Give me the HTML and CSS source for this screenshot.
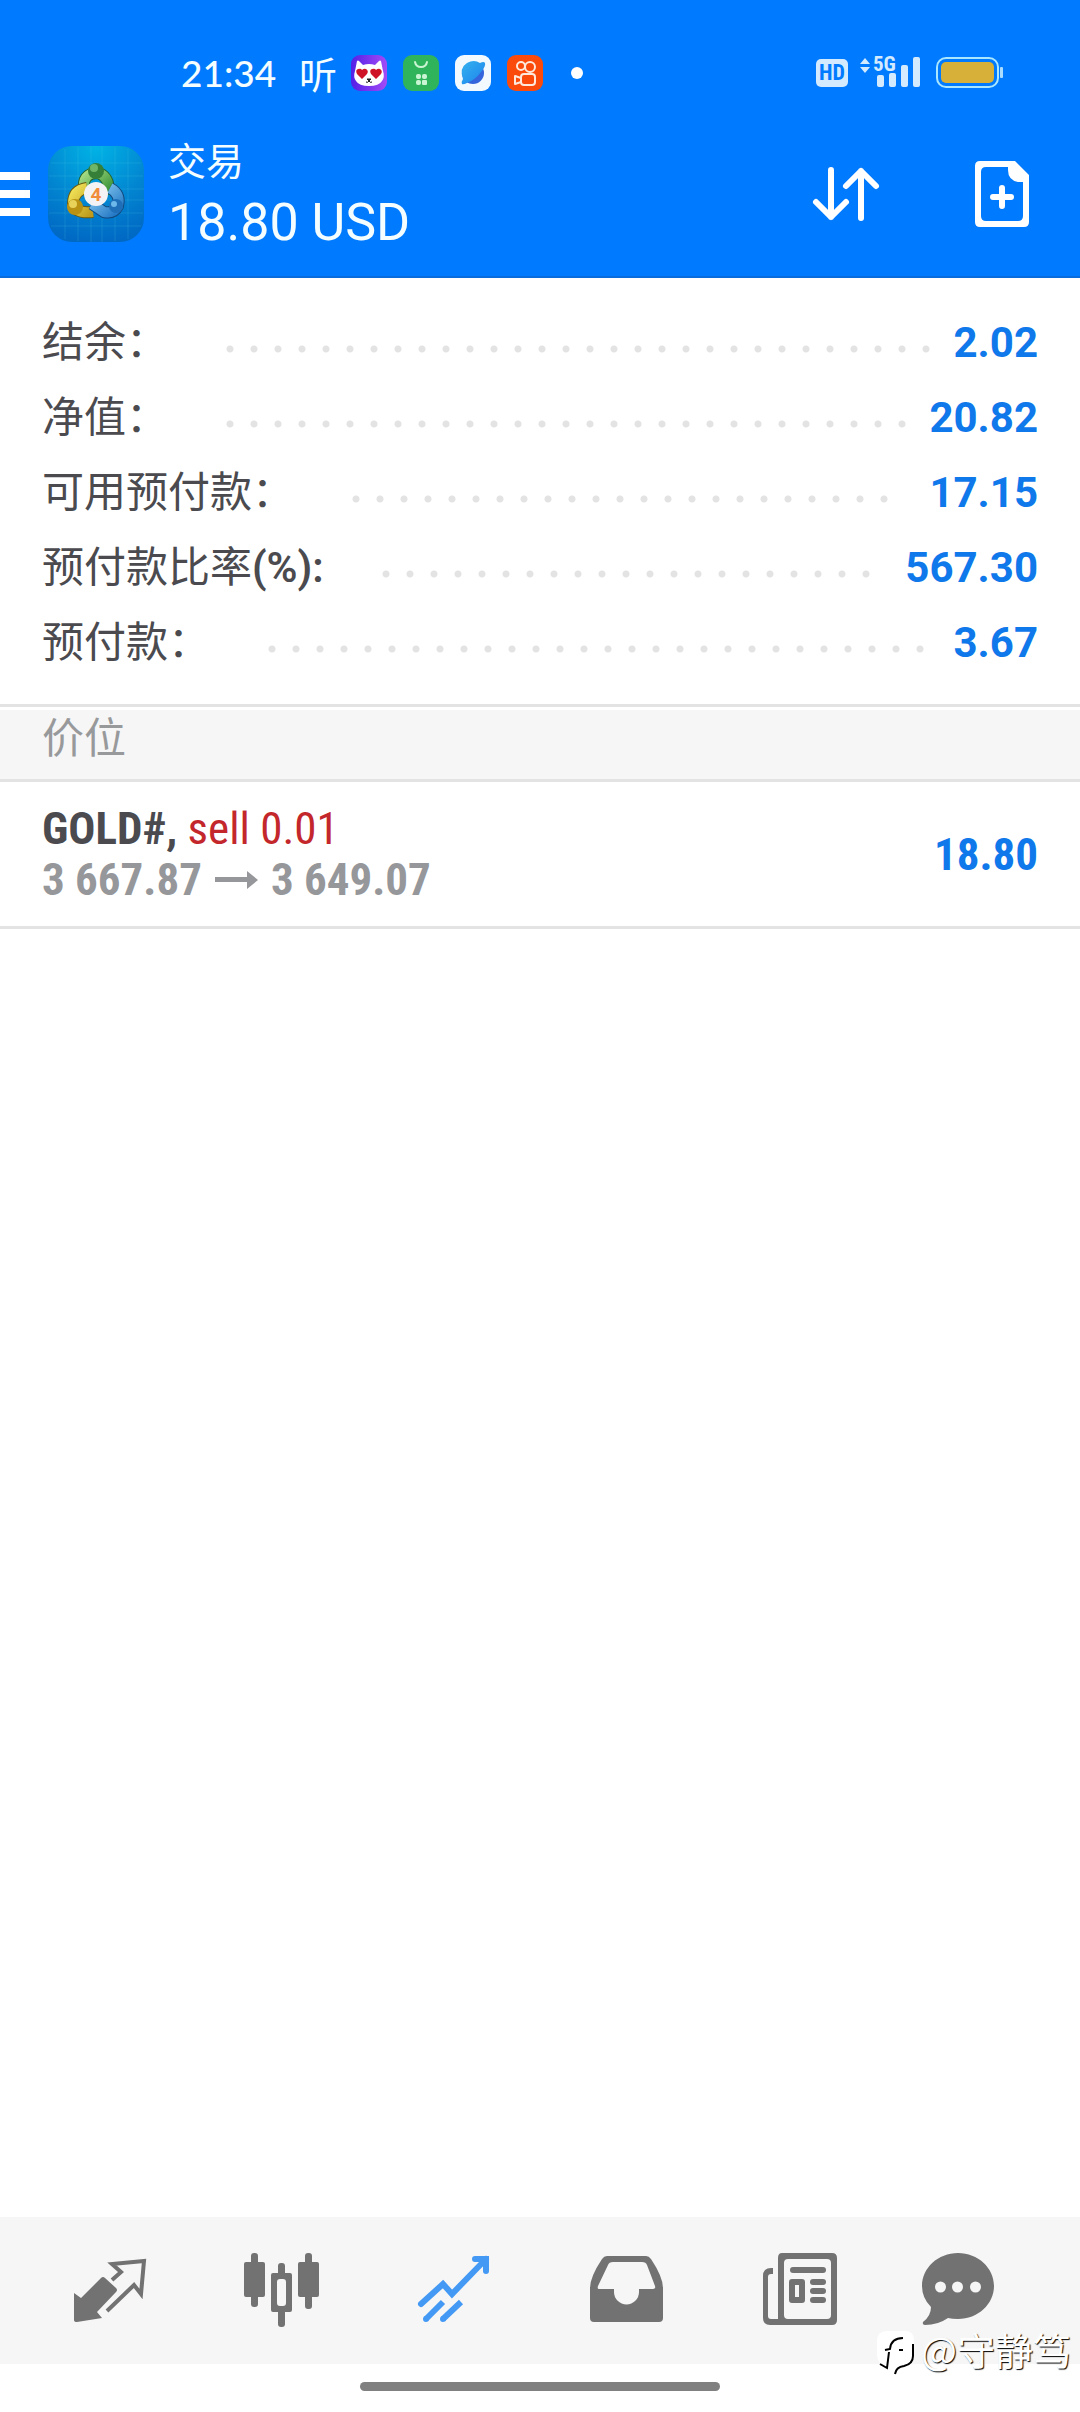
FILE: index.html
```html
<!DOCTYPE html>
<html lang="zh-CN">
<head>
<meta charset="utf-8">
<meta name="viewport" content="width=device-width, initial-scale=1">
<title>交易</title>
<link rel="stylesheet" href="styles.css">
</head>
<body>
<header class="top">
  <div class="status">
    <div class="status-group">
      <time class="clock">21:34</time>
      <span class="listen">听</span>
      <svg class="app-icon" viewBox="0 0 36 36" aria-hidden="true">
        <defs><linearGradient id="cat" x1="0" x2="1"><stop offset="0" stop-color="#5420e6"/><stop offset="1" stop-color="#a34bf7"/></linearGradient></defs>
        <rect width="36" height="36" rx="9" fill="url(#cat)"/>
        <path d="M6 6q1-1 2 0l4 4q6-2 12 0l4-4q1-1 2 0l2 10q2 6-1 10-3 5-13 5T5 26q-3-4-1-10z" fill="#fff"/>
        <path d="M11 24l-5-5q-2-4 1-5 3-1 4 1 2-2 4-1 3 2 1 5zM25 24l-5-5q-2-4 1-5 3-1 4 1 2-2 4-1 3 2 1 5z" fill="#cf1428"/>
        <path d="M16 24h4l-2 2zM15 27q2 1 3-1 1 2 3 1" fill="#222" stroke="#222"/>
      </svg>
      <svg class="app-icon" viewBox="0 0 36 36" aria-hidden="true">
        <rect width="36" height="36" rx="9" fill="#2fb35b"/>
        <path d="M12 7q1 5 6 5t6-5" fill="none" stroke="#c9f5d2" stroke-width="2" stroke-linecap="round"/>
        <g fill="#c9f5d2"><rect x="13" y="19" width="5" height="5" rx="2"/><rect x="19" y="19" width="5" height="5" rx="2"/><rect x="13" y="25" width="5" height="5" rx="2"/><rect x="19" y="25" width="5" height="5" rx="1"/></g>
      </svg>
      <svg class="app-icon" viewBox="0 0 36 36" aria-hidden="true">
        <defs><linearGradient id="planet" x1="0" x2="1" y1="0" y2="1"><stop offset="0" stop-color="#35b2ee"/><stop offset="1" stop-color="#1c83ee"/></linearGradient></defs>
        <rect width="36" height="36" rx="9" fill="#f2faff"/>
        <circle cx="18" cy="18" r="11" fill="#3465dc"/>
        <path d="M7 29q-1-2 1-5Q4 13 12 8q7-4 13 0 4-2 5 0 1 3-4 9-6 8-14 11-4 2-5 1z" fill="url(#planet)"/>
      </svg>
      <svg class="app-icon" viewBox="0 0 36 36" aria-hidden="true">
        <rect width="36" height="36" rx="9" fill="#fa4b0c"/>
        <g fill="none" stroke="#ffe9dc" stroke-width="2"><circle cx="14" cy="11" r="4"/><circle cx="23" cy="12" r="5"/><rect x="14" y="19" width="14" height="11" rx="3"/><path d="M14 23l-6-2v8l6-2z" stroke-linejoin="round"/></g>
      </svg>
      <span class="more-dot"></span>
    </div>
    <div class="status-group status-right">
      <span class="hd">HD</span>
      <svg class="signal" viewBox="0 0 60 36" aria-hidden="true">
        <path d="M0 9l5-6 5 6zM0 12l5 6 5-6z" fill="#d3eaff"/>
        <text x="13" y="16" class="signal-text">5G</text>
        <g fill="#d3eaff"><rect x="17" y="20" width="7" height="12" rx="2"/><rect x="29" y="18" width="7" height="14" rx="2"/><rect x="41" y="10" width="7" height="22" rx="2"/><rect x="53" y="2" width="7" height="30" rx="2"/></g>
      </svg>
      <svg class="battery" viewBox="0 0 68 36" aria-hidden="true">
        <rect x="1" y="3" width="61" height="29" rx="9" fill="none" stroke="#a9e6ff" stroke-width="2"/>
        <rect x="5" y="7" width="53" height="21" rx="5" fill="#d6b038"/>
        <rect x="64" y="12" width="3" height="11" rx="1" fill="#a9dcff"/>
      </svg>
    </div>
  </div>
  <div class="app-bar">
    <button class="menu" aria-label="菜单"><span></span><span></span><span></span></button>
    <svg class="logo" viewBox="0 0 96 96" aria-hidden="true">
      <defs>
        <radialGradient id="tile" cx=".5" cy="0" r="1"><stop offset="0" stop-color="#00b4e6"/><stop offset=".6" stop-color="#0284d0"/><stop offset="1" stop-color="#0069c4"/></radialGradient>
        <linearGradient id="green" x1="0" x2="1" y1="0" y2="1"><stop offset="0" stop-color="#a6dc84"/><stop offset="1" stop-color="#2d8a2e"/></linearGradient>
        <linearGradient id="gold" x1="0" x2="1" y1="0" y2="1"><stop offset="0" stop-color="#f0e257"/><stop offset="1" stop-color="#bf9a1c"/></linearGradient>
        <linearGradient id="sky" x1="0" x2="1" y1="0" y2="1"><stop offset="0" stop-color="#8fd0f5"/><stop offset="1" stop-color="#2277c4"/></linearGradient>
      </defs>
      <rect width="96" height="96" rx="24" fill="url(#tile)"/>
      <path d="M17 3v90M30 1v94M43 0v96M54 0v96M67 1v94M80 3v90M3 17h90M1 30h94M0 43h96M0 54h96M1 67h94M3 80h90" stroke="#5fd0ee" stroke-opacity=".18"/>
      <g fill="none">
        <path d="M36 44q-2-16 12-17 14 1 13 22" stroke="#24602a" stroke-width="12"/>
        <path d="M36 44q-2-16 12-17 14 1 13 22" stroke="url(#green)" stroke-width="10"/>
        <path d="M39 42q-14 2-14 16 3 10 20 8" stroke="#6b5a10" stroke-width="12"/>
        <path d="M39 42q-14 2-14 16 3 10 20 8" stroke="url(#gold)" stroke-width="10"/>
        <path d="M62 42q11 6 8 18-4 8-14 6l-12-8" stroke="#104a80" stroke-width="12"/>
        <path d="M62 42q11 6 8 18-4 8-14 6l-12-8" stroke="url(#sky)" stroke-width="10"/>
      </g>
      <circle cx="48" cy="25" r="8" fill="#357f38"/><circle cx="46" cy="22" r="4" fill="#6fb568"/>
      <circle cx="27" cy="61" r="8" fill="#b99213"/><circle cx="25" cy="58" r="4" fill="#e9d25a"/>
      <circle cx="68" cy="60" r="7" fill="#1f6fb8"/><circle cx="66" cy="58" r="3" fill="#6db8ea"/>
      <circle cx="48" cy="48" r="12" fill="#f3f3f5"/>
      <text x="48" y="55" text-anchor="middle" class="logo-text">4</text>
    </svg>
    <div class="heading">
      <h1 class="title">交易</h1>
      <p class="profit-total">18.80 USD</p>
    </div>
    <div class="actions">
      <button class="action" aria-label="排序">
        <svg viewBox="0 0 72 72" fill="none" stroke="#fff" stroke-width="6" stroke-linecap="round" stroke-linejoin="round"><path d="M21 12v47M6 44l15 15 15-15M51 60V13M36 28l15-15 15 15"/></svg>
      </button>
      <button class="action" aria-label="新订单">
        <svg viewBox="0 0 72 72"><path fill="#fff" fill-rule="evenodd" d="M14 3h35l14 14v47q0 5-5 5H14q-5 0-5-5V8q0-5 5-5zM20 9q-5 0-5 5v44q0 5 5 5h32q5 0 5-5V24h-5Q42 22 42 12V9z"/><path d="M36 30v18M27 39h18" stroke="#fff" stroke-width="6" stroke-linecap="round"/></svg>
      </button>
    </div>
  </div>
</header>

<main class="content">
  <dl class="summary">
    <div class="summary-row"><dt>结余：</dt><dd class="leader" aria-hidden="true"></dd><dd class="amount">2.02</dd></div>
    <div class="summary-row"><dt>净值：</dt><dd class="leader" aria-hidden="true"></dd><dd class="amount">20.82</dd></div>
    <div class="summary-row"><dt>可用预付款：</dt><dd class="leader" aria-hidden="true"></dd><dd class="amount">17.15</dd></div>
    <div class="summary-row"><dt>预付款比率<span class="unit">(%):</span></dt><dd class="leader" aria-hidden="true"></dd><dd class="amount">567.30</dd></div>
    <div class="summary-row"><dt>预付款：</dt><dd class="leader" aria-hidden="true"></dd><dd class="amount">3.67</dd></div>
  </dl>
  <h2 class="section-title">价位</h2>
  <ul class="positions">
    <li class="position">
      <div class="position-info">
        <p class="symbol">GOLD#, <span class="side">sell 0.01</span></p>
        <p class="prices"><span>3 667.87</span><svg class="arrow" viewBox="0 0 43 18" aria-label="至"><path d="M0 6h32V0l11 9-11 9v-7H0z" fill="#96979a"/></svg><span>3 649.07</span></p>
      </div>
      <span class="profit">18.80</span>
    </li>
  </ul>
</main>

<nav class="tabs">
  <a class="tab" href="#quotes" aria-label="行情"><svg viewBox="0 0 96 96"><path d="M12 51l7 5 20-20q2-2 4 0l11 10q2 2 0 4L35 70l5 6-25 4q-3 0-3-2z" fill="currentColor"/><path d="M50 38l9-8-9-8 32-3-3 33-7-9-27 26" fill="none" stroke="currentColor" stroke-width="4"/></svg></a>
  <a class="tab" href="#charts" aria-label="图表"><svg viewBox="0 0 96 96" fill="currentColor"><rect x="10" y="20" width="21" height="35" rx="2"/><rect x="17" y="11" width="7" height="54" rx="3"/><rect x="64" y="20" width="21" height="35" rx="2"/><rect x="71" y="11" width="7" height="56" rx="3"/><rect x="44" y="21" width="7" height="14" rx="3"/><rect x="44" y="66" width="7" height="19" rx="3"/><path fill-rule="evenodd" d="M39 31h17q2 0 2 2v35q0 2-2 2H39q-2 0-2-2V33q0-2 2-2zM46 37q-3 0-3 3v21q0 3 3 3h3q3 0 3-3V40q0-3-3-3z"/></svg></a>
  <a class="tab tab-active" href="#trade" aria-label="交易" aria-current="page"><svg viewBox="0 0 96 96" fill="none" stroke="currentColor" stroke-width="6"><path d="M15 62l22-20 9 10 34-35M69 17h11v12" stroke-linecap="round"/><path d="M20 77l17-17M37 77l18-17"/><path d="M20 77h0M37 77h0" stroke-linecap="round"/></svg></a>
  <a class="tab" href="#history" aria-label="历史"><svg viewBox="0 0 96 96" fill="currentColor"><path fill-rule="evenodd" d="M29 14h39q3 0 5 3 12 18 12 29v30q0 4-4 4H16q-4 0-4-4V46q0-11 12-29 2-3 5-3zM35 20q-4 0-5 3L20 44q-1 3 1 3h15v3a12 12 0 0 0 25 0v-3h14q3 0 2-3l-8-21q-1-3-5-3z"/></svg></a>
  <a class="tab" href="#news" aria-label="新闻"><svg viewBox="0 0 96 96" fill="currentColor"><path fill-rule="evenodd" d="M32 11h50q5 0 5 5v62q0 5-5 5H20q-7 0-7-7V34q0-8 8-8h2v6h-2q-3 0-3 3v39q0 3 3 3h7V16q0-5 4-5zM38 17q-4 0-4 4v52q0 4 4 4h39q4 0 4-4V21q0-4-4-4z"/><rect x="40" y="25" width="36" height="6" rx="3"/><path fill-rule="evenodd" d="M42 37h10q3 0 3 3v18q0 3-3 3H42q-3 0-3-3V40q0-3 3-3zM45 43v12h4V43z"/><rect x="60" y="37" width="16" height="6" rx="3"/><rect x="60" y="46" width="16" height="6" rx="3"/><rect x="60" y="55" width="16" height="6" rx="3"/></svg></a>
  <a class="tab" href="#messages" aria-label="消息"><svg viewBox="0 0 96 96" fill="currentColor"><path fill-rule="evenodd" d="M36 11c20 0 36 15 36 33S56 77 36 77q-6 0-10-1-10 7-23 7-3 0-2-3 8-6 8-15-9-9-9-21C0 26 16 11 36 11zM13 45a5 5 0 1 0 11 0 5 5 0 1 0-11 0zM30 45a5 5 0 1 0 11 0 5 5 0 1 0-11 0zM48 45a5 5 0 1 0 11 0 5 5 0 1 0-11 0z"/></svg></a>
</nav>
<div class="gesture"><span class="gesture-pill"></span></div>

<div class="watermark">
  <svg class="watermark-icon" viewBox="0 0 38 44" aria-hidden="true">
    <path d="M10 0h18q9 0 9 9v17q0 9-11 10l-8 7v-6H10Q0 32 0 24V10Q0 0 10 0z" fill="#fff"/>
    <g fill="none" stroke="#000" stroke-width="2"><path d="M8 19l5-1Q14 7 26 7M22 19h4M12 21l-2 16-7-4M36 13v12q0 8-9 10-8 1-9 8"/></g>
  </svg>
  <span>@守静笃</span>
</div>
</body>
</html>
```
FILE: styles.css
```css
* { box-sizing: border-box; }

body {
  margin: 0;
  min-height: 100vh;
  display: flex;
  flex-direction: column;
  position: relative;
  background: #fff;
  color: #4a4a4f;
  font-family: Roboto, "Noto Sans CJK SC", sans-serif;
  font-size: 42px;
}

h1, h2, p, dl, dd, ul { margin: 0; padding: 0; }
h1, h2 { font-weight: 400; }
ul { list-style: none; }
svg { display: block; }
button { border: 0; padding: 0; background: none; color: inherit; }

/* Header */
.top {
  background: #007aff;
  border-bottom: 2px solid #0a6cdc;
  color: #f4fdff;
}

.status {
  display: flex;
  justify-content: space-between;
  padding: 55px 76px 21px 181px;
}
.status-group { display: flex; align-items: center; gap: 16px; height: 36px; }
.status-right { gap: 12px; }
.clock { width: 102px; font: 500 37px/36px Lato, sans-serif; }
.listen { width: 36px; font: 400 38px/36px "Noto Sans CJK SC", sans-serif; }
.app-icon { width: 36px; height: 36px; }
.more-dot { width: 12px; height: 12px; margin-left: 12px; border-radius: 50%; background: #fff; }
.hd {
  width: 32px;
  border-radius: 5px;
  background: #d3eaff;
  color: #007aff;
  font: 700 22px/28px "Roboto Condensed", Roboto, sans-serif;
  text-align: center;
}
.signal { width: 60px; height: 36px; overflow: visible; }
.signal-text { font: 700 21px "Roboto Condensed", Roboto, sans-serif; fill: #d3eaff; }
.battery { width: 68px; height: 36px; margin-left: 4px; }

.app-bar { display: flex; align-items: center; height: 164px; padding-right: 42px; }
.menu { display: grid; gap: 10px; width: 30px; margin-right: 18px; }
.menu span { height: 8px; background: #fff; }
.logo { width: 96px; height: 96px; }
.logo-text { font: 700 19px Roboto, sans-serif; fill: #f08c3c; }
.heading { margin-left: 24px; padding-top: 8px; }
.title { font-size: 38px; line-height: 50px; }
.profit-total { font-size: 52px; line-height: 72px; }
.actions { display: flex; gap: 84px; margin-left: auto; }
.action { width: 72px; height: 72px; }

/* Account summary */
.summary { padding: 27px 42px 24px; }
.summary-row { display: flex; height: 75px; line-height: 75px; }
.unit { font-weight: 600; }
.leader { flex: 1; margin: 0 6px 0 58px; }
.leader::before {
  content: "";
  display: block;
  width: round(down, 100%, 24px);
  height: 8px;
  margin-top: 40px;
  background: radial-gradient(circle at 4px 4px, #e3e3e4 3px, transparent 4px) 0 0 / 24px 8px repeat-x;
}
.amount { color: #0f78ea; font-weight: 700; }

.section-title {
  border: solid #e3e3e3;
  border-width: 3px 0;
  padding: 0 42px 9px;
  background: #f6f6f6;
  box-shadow: inset 0 3px #fff;
  color: #98999b;
  font-size: 42px;
  line-height: 63px;
}

/* Open positions */
.position {
  display: flex;
  align-items: center;
  justify-content: space-between;
  padding: 21px 42px;
  border-bottom: 3px solid #e3e3e3;
  font-family: "Roboto Condensed", "Liberation Sans Narrow", Roboto, sans-serif;
  font-size: 45px;
  font-weight: 700;
  line-height: 51px;
}
.side { color: #c3272b; font-weight: 400; }
.prices { display: flex; align-items: center; color: #96979a; }
.arrow { width: 43px; height: 18px; margin: 0 13px; }
.profit { color: #0f78ea; }

/* Bottom navigation */
.content { flex: 1; }
.tabs { display: flex; padding: 25px 24px 26px; background: #f6f6f6; }
.tab { flex: 1; display: flex; justify-content: center; color: #727272; }
.tab svg { width: 96px; height: 96px; }
.tab-active { color: #4499f4; }
.gesture { display: flex; justify-content: center; padding: 18px 0 21px; }
.gesture-pill { width: 33.333%; height: 9px; border-radius: 5px; background: #808080; }

.watermark {
  position: absolute;
  right: 9px;
  bottom: 37px;
  display: flex;
  gap: 6px;
  color: #fff;
  font: 400 38px/36px "Noto Sans CJK SC", sans-serif;
  text-shadow: 1px 1px 1px #000;
}
.watermark-icon { width: 38px; height: 44px; }
```
